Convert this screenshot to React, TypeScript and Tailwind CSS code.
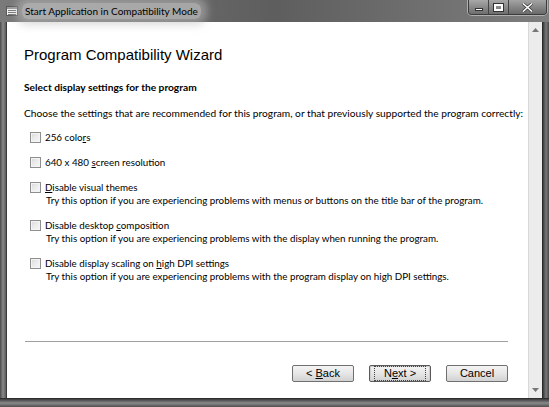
import React from "react";

const ui = { fontFamily: 'Lato, "Open Sans", "Liberation Sans", sans-serif' };
const arial = { fontFamily: '"Liberation Sans", Arial, sans-serif' };

function Check() {
  return (
    <span className="inline-block w-[11px] h-[11px] shrink-0 border border-[#8f8f8f] bg-gradient-to-br from-[#d8d8d8] via-[#ececec] to-[#f8f8f8] shadow-[inset_0_0_0_1px_#f4f4f4]" />
  );
}

type Opt = { label: React.ReactNode; desc?: string };

const options: Opt[] = [
  { label: <>256 colo<u>r</u>s</> },
  { label: <>640 x 480 <u>s</u>creen resolution</> },
  {
    label: <><u>D</u>isable visual themes</>,
    desc: "Try this option if you are experiencing problems with menus or buttons on the title bar of the program.",
  },
  {
    label: <>Disable desktop <u>c</u>omposition</>,
    desc: "Try this option if you are experiencing problems with the display when running the program.",
  },
  {
    label: <>Disable display scaling on <u>h</u>igh DPI settings</>,
    desc: "Try this option if you are experiencing problems with the program display on high DPI settings.",
  },
];

function Btn({ children, focused }: { children: React.ReactNode; focused?: boolean }) {
  return (
    <button
      style={arial}
      className={`w-[62px] h-[17px] shrink-0 rounded-[2px] border text-[11px] leading-none text-black bg-gradient-to-b from-[#f4f4f4] via-[#e6e6e6] to-[#d2d2d2] flex items-center justify-center ${
        focused ? "border-[#5a5a5a] shadow-[inset_0_0_0_1px_#cfcfcf]" : "border-[#707070]"
      }`}
    >
      <span className={focused ? "outline outline-1 outline-dotted outline-[#444] px-[9px] py-[1px]" : ""}>{children}</span>
    </button>
  );
}

export default function App() {
  return (
    <div className="w-[549px] h-[407px] flex flex-col bg-[#6b6b6b] overflow-hidden" style={ui}>
      {/* title bar */}
      <div className="h-[22px] shrink-0 flex items-center relative bg-gradient-to-r from-[#7a7a7a] via-[#5e5e5e] to-[#7e7e7e]">
        <div className="flex items-center pl-[6px] gap-[4px]">
          <svg width="12" height="10" viewBox="0 0 12 10">
            <rect x="0.5" y="0.5" width="11" height="9" fill="#f2f2f2" stroke="#5a5a5a" />
            <rect x="1" y="1" width="10" height="2" fill="#9a9a9a" />
            <line x1="2" y1="4.5" x2="10" y2="4.5" stroke="#777" />
            <line x1="2" y1="6.5" x2="10" y2="6.5" stroke="#777" />
            <line x1="2" y1="8.5" x2="10" y2="8.5" stroke="#777" />
          </svg>
          <span className="text-[10px] text-black leading-none px-[3px] py-[3px] rounded-[6px] bg-[#c2c2c2]/70 shadow-[0_0_8px_6px_rgba(190,190,190,0.55)]">
            Start Application in Compatibility Mode
          </span>
        </div>
        <div className="absolute right-[2px] top-0 flex h-[15px] rounded-b-[4px] border border-t-0 border-[#3c3c3c] overflow-hidden shadow-[0_0_0_1px_#b0b0b0]">
          <div className="w-[20px] flex items-center justify-center bg-gradient-to-b from-[#a8a8a8] to-[#6e6e6e] border-r border-[#444]">
            <span className="w-[8px] h-[3px] bg-white border border-[#333] mt-[5px]" />
          </div>
          <div className="w-[20px] flex items-center justify-center bg-gradient-to-b from-[#a8a8a8] to-[#6e6e6e] border-r border-[#444]">
            <span className="w-[9px] h-[7px] border-2 border-white outline outline-1 outline-[#333]" />
          </div>
          <div className="w-[37px] flex items-center justify-center bg-gradient-to-b from-[#a4a4a4] to-[#6a6a6a]">
            <svg width="11" height="9" viewBox="0 0 11 9">
              <path d="M1 0.5 L5.5 4.5 L10 0.5 M1 8.5 L5.5 4.5 L10 8.5" stroke="#333" strokeWidth="3" fill="none" />
              <path d="M1 0.5 L5.5 4.5 L10 0.5 M1 8.5 L5.5 4.5 L10 8.5" stroke="#fff" strokeWidth="1.6" fill="none" />
            </svg>
          </div>
        </div>
      </div>

      {/* body */}
      <div className="flex flex-1 min-h-0">
        <div className="w-[7px] shrink-0 bg-gradient-to-r from-[#4a4a4a] via-[#8a8a8a] to-[#5a5a5a] border-r border-[#3a3a3a]" />
        <div className="flex-1 min-w-0 bg-white flex flex-col pl-[17px] pr-[20px] text-black">
          <h1 className="mt-[23px] text-[15px] leading-[20px]" style={arial}>
            Program Compatibility Wizard
          </h1>
          <div className="mt-[15px] text-[10.2px] leading-[14px] font-bold">Select display settings for the program</div>
          <div className="mt-[12px] text-[10.2px] leading-[14px] whitespace-nowrap">
            Choose the settings that are recommended for this program, or that previously supported the program correctly:
          </div>
          <div className="mt-[10px] pl-[6px] flex flex-col gap-[11px]">
            {options.map((o, i) => (
              <div key={i} className="flex flex-col">
                <div className="flex items-center gap-[4px] h-[14px] text-[9.8px]">
                  <Check />
                  <span className="leading-[14px]">{o.label}</span>
                </div>
                {o.desc && <div className="pl-[16px] text-[9.8px] leading-[13px] whitespace-nowrap">{o.desc}</div>}
              </div>
            ))}
          </div>
          <div className="flex-1" />
          <div className="ml-[1px] h-px bg-[#a0a0a0]" />
          <div className="flex justify-end gap-[15px] mt-[23px] mb-[16px]">
            <Btn>
              &lt; <u>B</u>ack
            </Btn>
            <Btn focused>
              N<u>e</u>xt &gt;
            </Btn>
            <Btn>Cancel</Btn>
          </div>
        </div>
        <div className="w-[14px] shrink-0 bg-[#ececec] border-l border-[#d8d8d8] flex flex-col items-center justify-between py-[6px]">
          <svg width="7" height="4" viewBox="0 0 7 4">
            <path d="M0 4 L3.5 0 L7 4 Z" fill="#777" />
          </svg>
          <svg width="7" height="4" viewBox="0 0 7 4">
            <path d="M0 0 L3.5 4 L7 0 Z" fill="#777" />
          </svg>
        </div>
        <div className="w-[7px] shrink-0 bg-gradient-to-r from-[#3a3a3a] via-[#7a7a7a] to-[#4a4a4a] border-l border-[#2a2a2a]" />
      </div>
      <div className="h-[9px] shrink-0 bg-gradient-to-b from-[#3c3c3c] via-[#8a8a8a] to-[#505050] border-t border-[#2e2e2e]" />
    </div>
  );
}
